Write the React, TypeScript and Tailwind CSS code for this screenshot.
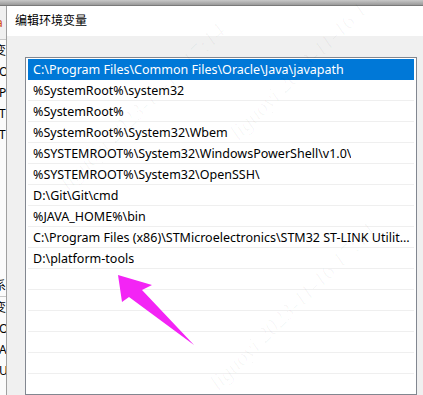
import React from 'react';

const paths = [
  'C:\\Program Files\\Common Files\\Oracle\\Java\\javapath',
  '%SystemRoot%\\system32',
  '%SystemRoot%',
  '%SystemRoot%\\System32\\Wbem',
  '%SYSTEMROOT%\\System32\\WindowsPowerShell\\v1.0\\',
  '%SYSTEMROOT%\\System32\\OpenSSH\\',
  'D:\\Git\\Git\\cmd',
  '%JAVA_HOME%\\bin',
  'C:\\Program Files (x86)\\STMicroelectronics\\STM32 ST-LINK Utility\\ST-LINK Utility',
  'D:\\platform-tools',
];

const rows = [...paths, ...Array(8).fill('')];

export default function App() {
  return (
    <div className="relative w-[423px] h-[395px] overflow-hidden bg-[#f0f0f0] flex flex-col font-['Noto_Sans','Noto_Sans_CJK_SC',sans-serif] text-[12px]">
      {/* top edge of screen behind */}
      <div className="h-[6px] shrink-0 bg-gradient-to-b from-[#c8c8c8] to-[#9a9a9a] border-b border-[#7a7a7a]" />

      <div className="flex flex-1 min-h-0">
        {/* background window peeking out */}
        <div className="w-[7px] shrink-0 bg-[#fbfbfb] border-r border-[#a0a0a0] overflow-hidden flex flex-col text-black leading-[21px]">
          <div className="h-[34px] bg-[#f0f0f0] border-b border-[#c8c8c8] flex items-center">
            <span className="text-[#d24a1a] -ml-[4px]">a</span>
          </div>
          <span className="-ml-[6px] whitespace-nowrap">变量</span>
          <span className="-ml-[1px] whitespace-nowrap">Or</span>
          <span className="-ml-[1px] whitespace-nowrap">Pa</span>
          <span className="-ml-[1px] whitespace-nowrap">TE</span>
          <span className="-ml-[1px] whitespace-nowrap">TM</span>
          <div className="h-[130px]" />
          <span className="-ml-[6px] whitespace-nowrap border-b border-[#c8c8c8]">系统</span>
          <span className="-ml-[6px] whitespace-nowrap">变量</span>
          <span className="-ml-[1px] whitespace-nowrap">Or</span>
          <span className="-ml-[1px] whitespace-nowrap">A</span>
          <span className="-ml-[1px] whitespace-nowrap">U</span>
        </div>

        {/* dialog */}
        <div className="flex-1 flex flex-col min-w-0">
          <div className="h-[30px] shrink-0 bg-white flex items-center pl-[8px] text-black">
            编辑环境变量
          </div>
          <div className="flex-1 pt-[21px] pl-[18px] pr-[6px] min-h-0">
            <div className="h-full border border-[#828790] bg-white pt-[1px] px-[2px] overflow-hidden text-[12.5px]">
              {rows.map((p, i) => (
                <div
                  key={i}
                  className={
                    i === 0
                      ? 'h-[21px] bg-[#0078d7] text-white flex items-center pl-[5px] pr-[3px] pt-[1px]'
                      : 'h-[21px] border-b border-[#efefef] text-black flex items-center pl-[5px] pr-[3px] pt-[2px]'
                  }
                >
                  <span className="truncate">{p}</span>
                </div>
              ))}
            </div>
          </div>
        </div>
      </div>

      {/* faint watermark */}
      <div className="pointer-events-none absolute inset-0 text-[22px] text-black/[0.03] font-['Liberation_Serif',serif] italic">
        <span className="absolute left-[30px] top-[90px] -rotate-45 whitespace-nowrap">liguoyi 2023-11-16 17:14</span>
        <span className="absolute left-[200px] top-[40px] -rotate-45 whitespace-nowrap">liguoyi 2023-11-16 17:14</span>
        <span className="absolute left-[180px] top-[290px] -rotate-45 whitespace-nowrap">liguoyi 2023-11-16 17:14</span>
      </div>

      {/* magenta arrow */}
      <svg className="pointer-events-none absolute left-0 top-0" width="423" height="395">
        <path d="M118 275 L152 285 L142 290 L194 345 L129 297 L122 302 Z" fill="#f324f5" />
      </svg>
    </div>
  );
}
